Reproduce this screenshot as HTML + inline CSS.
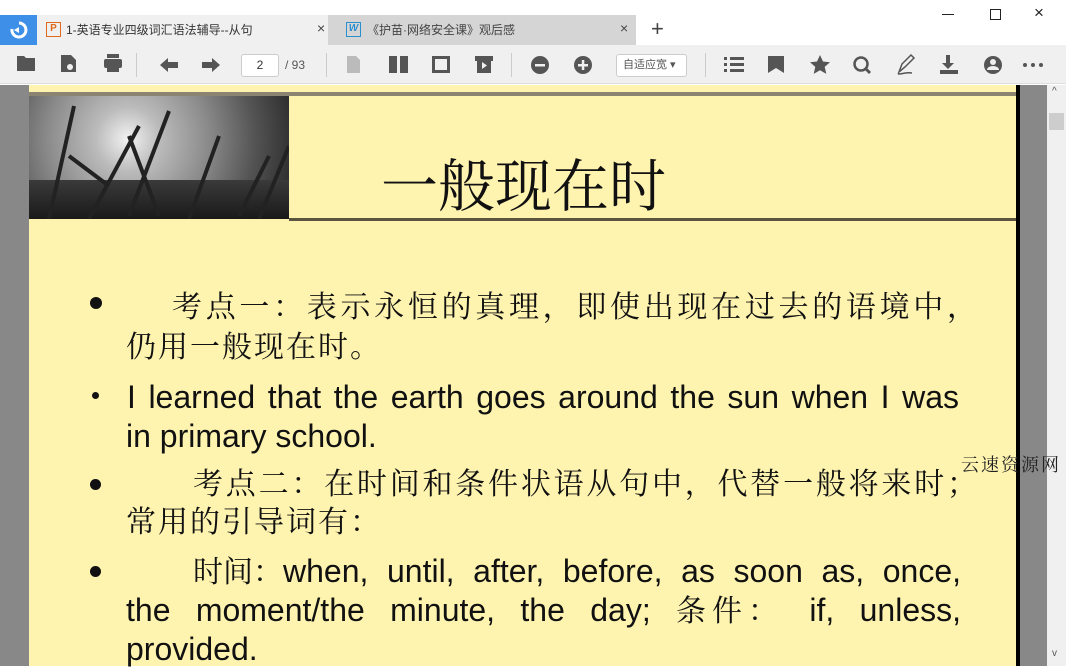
<!DOCTYPE html>
<html><head><meta charset="utf-8">
<style>
*{margin:0;padding:0;box-sizing:border-box}
body{width:1066px;height:666px;overflow:hidden;background:#fff;font-family:"Liberation Sans","Noto Sans CJK SC",sans-serif;position:relative}
.a{position:absolute}
.cj{font-family:"Liberation Serif","Noto Serif CJK SC",serif;color:#111;white-space:nowrap}
.en{font-family:"Liberation Sans","Noto Serif CJK SC",sans-serif;color:#111;white-space:nowrap;font-size:32px}
.j{text-align:justify;text-align-last:justify}
</style></head><body>
<!-- tab bar -->
<div class="a" style="left:0;top:15px;width:37px;height:30px;background:#3d8fe8"></div>
<svg class="a" style="left:8px;top:20px" width="22" height="20"><path d="M4 9 a7 7 0 1 0 7-6" fill="none" stroke="#fff" stroke-width="3"/><path d="M6 10 l5-3 l0 6z" fill="#fff"/></svg>
<div class="a" style="left:37px;top:15px;width:291px;height:30px;background:#f0f0f0"></div>
<div class="a" style="left:46px;top:22px;width:15px;height:15px;border:1.5px solid #e06a1a;color:#e06a1a;font-size:10px;font-weight:bold;text-align:center;line-height:12px">P</div>
<div class="a" style="left:66px;top:21px;font-size:12px;color:#333">1-英语专业四级词汇语法辅导--从句</div>
<div class="a" style="left:317px;top:20px;font-size:14px;color:#444">×</div>
<div class="a" style="left:328px;top:15px;width:308px;height:30px;background:#d5d5d5"></div>
<div class="a" style="left:346px;top:22px;width:15px;height:15px;border:1.5px solid #2a8fd0;color:#2a8fd0;font-size:10px;font-weight:bold;text-align:center;line-height:12px;font-style:italic">W</div>
<div class="a" style="left:367px;top:21px;font-size:12px;color:#444">《护苗·网络安全课》观后感</div>
<div class="a" style="left:620px;top:20px;font-size:14px;color:#444">×</div>
<div class="a" style="left:651px;top:16px;font-size:22px;color:#444;font-weight:300">+</div>
<div class="a" style="left:942px;top:14px;width:12px;height:1px;background:#222"></div>
<div class="a" style="left:990px;top:9px;width:11px;height:11px;border:1px solid #222"></div>
<div class="a" style="left:1034px;top:3px;font-size:17px;color:#222">×</div>
<!-- toolbar -->
<div class="a" style="left:0;top:45px;width:1066px;height:39px;background:#f0f0f0;border-bottom:1px solid #ddd"></div>
<svg class="a" style="left:0;top:45px" width="1066" height="39" fill="#555">
<path d="M17 11h7l2 2h9v13H17z"/>
<path d="M61 10h10l5 5v12H61z"/><circle cx="70" cy="22" r="3" fill="#f0f0f0"/>
<rect x="104" y="14" width="18" height="9" rx="2"/><rect x="107" y="9" width="12" height="4"/><rect x="107" y="21" width="12" height="6"/>
<path d="M160 20l8-7v4h10v6h-10v4z"/>
<path d="M220 20l-8-7v4h-10v6h10v4z"/>
<path d="M347 11h9l4 4v13h-13z" fill="#bbb"/>
<rect x="389" y="11" width="8" height="17"/><rect x="400" y="11" width="8" height="17"/>
<path d="M432 11h18v17h-18z M435 14v11h12V14z"/>
<path d="M475 11h18v5h-2v12h-14V16h-2z"/><path d="M482 17l5 3.5-5 3.5z" fill="#f0f0f0"/>
<circle cx="540" cy="20" r="9"/><rect x="535" y="19" width="10" height="2.5" fill="#f0f0f0"/>
<circle cx="583" cy="20" r="9"/><rect x="578" y="19" width="10" height="2.5" fill="#f0f0f0"/><rect x="581.8" y="15" width="2.5" height="10" fill="#f0f0f0"/>
<rect x="724" y="12" width="3" height="3"/><rect x="730" y="12" width="14" height="3"/><rect x="724" y="18" width="3" height="3"/><rect x="730" y="18" width="14" height="3"/><rect x="724" y="24" width="3" height="3"/><rect x="730" y="24" width="14" height="3"/>
<path d="M768 11h16v17l-8-5-8 5z"/>
<path d="M820 10l3 6.5 7 .7-5.3 4.7 1.6 7-6.3-3.7-6.3 3.7 1.6-7-5.3-4.7 7-.7z"/>
<circle cx="861" cy="19" r="6.5" fill="none" stroke="#555" stroke-width="2.5"/><path d="M865 23l5 5" stroke="#555" stroke-width="3"/>
<path d="M899 27l3-8 9-9 3 3-9 9z M898 29c5 0 8-2 14-1" stroke="#555" stroke-width="1.5" fill="none"/>
<path d="M946 10h4v8h4l-6 6-6-6h4z"/><rect x="940" y="25" width="18" height="4"/>
<circle cx="993" cy="20" r="9"/><circle cx="993" cy="17" r="3" fill="#f0f0f0"/><path d="M987 25a6 4 0 0 1 12 0z" fill="#f0f0f0"/>
<circle cx="1025" cy="20" r="2"/><circle cx="1033" cy="20" r="2"/><circle cx="1041" cy="20" r="2"/>
<rect x="136" y="8" width="1" height="24" fill="#ccc"/><rect x="326" y="8" width="1" height="24" fill="#ccc"/><rect x="511" y="8" width="1" height="24" fill="#ccc"/><rect x="705" y="8" width="1" height="24" fill="#ccc"/>
</svg>
<div class="a" style="left:241px;top:54px;width:38px;height:23px;background:#fff;border:1px solid #ccc;border-radius:3px;font-size:12px;text-align:center;line-height:21px;color:#333">2</div>
<div class="a" style="left:285px;top:58px;font-size:12px;color:#555">/ 93</div>
<div class="a" style="left:616px;top:54px;width:71px;height:23px;background:#fff;border:1px solid #ccc;border-radius:3px;font-size:11px;line-height:21px;color:#555;padding-left:6px">自适应宽 ▾</div>
<!-- doc area -->
<div class="a" style="left:0;top:85px;width:1047px;height:581px;background:#888"></div>
<div class="a" style="left:29px;top:85px;width:987px;height:581px;background:#fef4b0"></div>
<div class="a" style="left:29px;top:92px;width:991px;height:4px;background:#8a8470"></div>
<div class="a" style="left:1016px;top:85px;width:4px;height:581px;background:#000"></div>
<div class="a" style="left:29px;top:96px;width:260px;height:123px;background:radial-gradient(circle at 38% 35%,#f2f2f2 0,#bbb 18%,#8a8a8a 45%,#555 70%,#222 100%)"></div>
<div class="a" style="left:29px;top:180px;width:260px;height:39px;background:linear-gradient(#3a3a3a,#1a1a1a)"></div>
<svg class="a" style="left:29px;top:96px" width="260" height="123" stroke="#222" stroke-width="4" fill="none"><path d="M20 123 L45 10 M60 123 L110 30 M100 120 L140 15 M160 123 L190 40 M210 120 L240 60 M130 120 L100 40 M230 123 L260 50 M80 90 L40 60"/></svg>
<div class="a" style="left:289px;top:218px;width:727px;height:3px;background:#5a5440"></div>
<div class="a cj" style="left:381px;top:153px;font-size:57px;line-height:70px">一般现在时</div>
<!-- bullets -->
<div class="a" style="left:90px;top:297px;width:12px;height:12px;border-radius:50%;background:#111"></div>
<div class="a" style="left:92px;top:392px;width:7px;height:7px;border-radius:50%;background:#111"></div>
<div class="a" style="left:90px;top:479px;width:11px;height:11px;border-radius:50%;background:#111"></div>
<div class="a" style="left:90px;top:566px;width:11px;height:11px;border-radius:50%;background:#111"></div>
<div class="a cj j" style="left:172px;top:288px;width:805px;font-size:30px;line-height:40px">考点一：表示永恒的真理，即使出现在过去的语境中，</div>
<div class="a cj" style="left:126px;top:328px;font-size:30px;line-height:40px;letter-spacing:2px">仍用一般现在时。</div>
<div class="a en j" style="left:127px;top:377px;width:832px;line-height:40px">I learned that the earth goes around the sun when I was</div>
<div class="a en" style="left:126px;top:416px;line-height:40px">in primary school.</div>
<div class="a cj j" style="left:193px;top:465px;width:784px;font-size:30px;line-height:40px">考点二：在时间和条件状语从句中，代替一般将来时；</div>
<div class="a cj" style="left:126px;top:503px;font-size:30px;line-height:40px;letter-spacing:2px">常用的引导词有：</div>
<div class="a en j" style="left:193px;top:551px;width:768px;line-height:40px"><span class="cj" style="font-size:30px;display:inline-block">时间：</span>when, until, after, before, as soon as, once,</div>
<div class="a en j" style="left:126px;top:590px;width:835px;line-height:40px">the moment/the minute, the day; <span class="cj" style="font-size:30px;display:inline-block;letter-spacing:6px">条件：</span> if, unless,</div>
<div class="a en" style="left:126px;top:629px;line-height:40px">provided.</div>
<!-- scrollbar -->
<div class="a" style="left:1047px;top:85px;width:19px;height:581px;background:#f0f0f0"></div>
<div class="a" style="left:1049px;top:113px;width:15px;height:17px;background:#cdcdcd"></div>
<div class="a" style="left:1052px;top:86px;font-size:10px;color:#555">^</div>
<div class="a" style="left:1052px;top:648px;font-size:10px;color:#555">v</div>
<div class="a cj" style="left:961px;top:451px;font-size:18px;color:#222;letter-spacing:2px">云速资源网</div>
</body></html>
